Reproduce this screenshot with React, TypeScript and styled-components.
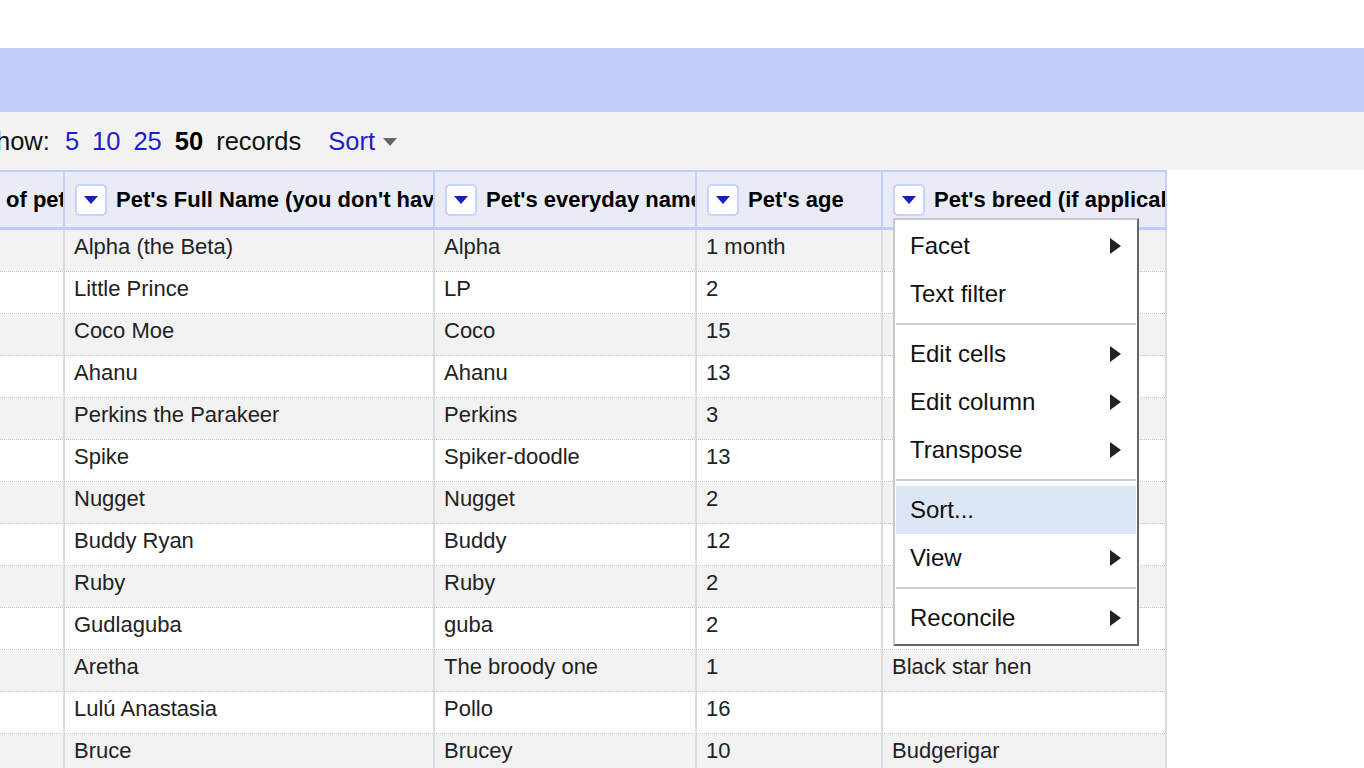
import React from "react";
import styled, { createGlobalStyle } from "styled-components";

const Global = createGlobalStyle`
  html, body { margin: 0; padding: 0; background: #ffffff; }
  body { font-family: "Liberation Sans", Arial, sans-serif; overflow: hidden; }
`;

const Page = styled.div`
  width: 1364px;
  height: 768px;
  overflow: hidden;
  background: #ffffff;
`;

const TopSpace = styled.div`
  height: 48px;
`;

const Banner = styled.div`
  height: 64px;
  background: #bfcdf8;
`;

const Toolbar = styled.div`
  height: 58px;
  background: #f2f2f2;
  display: flex;
  align-items: center;
  gap: 13px;
  margin-left: -21px;
  font-size: 25.5px;
  color: #111;
  white-space: nowrap;
`;

const Link = styled.span<{ $first?: boolean }>`
  color: #1d1dcc;
  margin-left: ${(p) => (p.$first ? "2px" : "0")};
`;

const Current = styled.span`
  font-weight: bold;
  color: #000;
`;

const SortMenu = styled.span`
  display: flex;
  align-items: center;
  gap: 8px;
  margin-left: 14px;
  color: #1d1dcc;
`;

const Caret = styled.span`
  width: 0;
  height: 0;
  border-left: 7.5px solid transparent;
  border-right: 7.5px solid transparent;
  border-top: 8px solid #666;
  margin-top: 2px;
`;

const TableWrap = styled.div`
  position: relative;
  width: 1167px;
`;

const cols = "65px 370px 262px 186px 284px";

const HeaderRow = styled.div`
  display: grid;
  grid-template-columns: ${cols};
  height: 55px;
  border-top: 2px solid #bfcdf8;
  border-bottom: 3px solid #bfcdf8;
  background: #e9ecf6;
`;

const HeaderCell = styled.div<{ $pad?: number }>`
  display: flex;
  align-items: center;
  gap: 9px;
  padding-left: ${(p) => p.$pad ?? 10}px;
  border-right: 2px solid #c4d0f6;
  overflow: hidden;
  white-space: nowrap;
  font-size: 22px;
  font-weight: bold;
  color: #000;
`;

const DropButton = styled.span`
  flex: none;
  width: 28px;
  height: 28px;
  border: 2px solid #c6d2f7;
  border-radius: 5px;
  background: #ffffff;
  display: flex;
  align-items: center;
  justify-content: center;
  &::after {
    content: "";
    width: 0;
    height: 0;
    border-left: 7px solid transparent;
    border-right: 7px solid transparent;
    border-top: 8px solid #1c1cb8;
    margin-top: 1px;
  }
`;

const Row = styled.div<{ $odd: boolean }>`
  display: grid;
  grid-template-columns: ${cols};
  height: 41px;
  border-bottom: 1px dotted #c4c4c4;
  background: ${(p) => (p.$odd ? "#f2f2f2" : "#ffffff")};
`;

const Cell = styled.div`
  padding: 4px 0 0 9px;
  border-right: 2px solid #dcdcdc;
  font-size: 22px;
  line-height: 26px;
  color: #222;
  white-space: nowrap;
  overflow: hidden;
`;

const Menu = styled.div`
  position: absolute;
  left: 893px;
  top: 48px;
  width: 240px;
  padding: 2px 1px;
  background: #ffffff;
  border-top: 2px solid #c8c8c8;
  border-left: 2px solid #c8c8c8;
  border-right: 2px solid #666666;
  border-bottom: 2px solid #666666;
  z-index: 5;
`;

const MenuItem = styled.div<{ $active?: boolean }>`
  height: 48px;
  display: flex;
  align-items: center;
  justify-content: space-between;
  padding: 0 15px 0 14px;
  font-size: 24px;
  color: #111;
  background: ${(p) => (p.$active ? "#dce6f5" : "transparent")};
`;

const SubArrow = styled.span`
  width: 0;
  height: 0;
  border-top: 8px solid transparent;
  border-bottom: 8px solid transparent;
  border-left: 11px solid #222;
`;

const Separator = styled.div`
  height: 2px;
  margin: 5px 0;
  background: #cccccc;
`;

const rows: [string, string, string, string][] = [
  ["Alpha (the Beta)", "Alpha", "1 month", ""],
  ["Little Prince", "LP", "2", ""],
  ["Coco Moe", "Coco", "15", ""],
  ["Ahanu", "Ahanu", "13", ""],
  ["Perkins the Parakeer", "Perkins", "3", ""],
  ["Spike", "Spiker-doodle", "13", ""],
  ["Nugget", "Nugget", "2", ""],
  ["Buddy Ryan", "Buddy", "12", ""],
  ["Ruby", "Ruby", "2", ""],
  ["Gudlaguba", "guba", "2", ""],
  ["Aretha", "The broody one", "1", "Black star hen"],
  ["Lulú Anastasia", "Pollo", "16", ""],
  ["Bruce", "Brucey", "10", "Budgerigar"],
];

type MenuEntry = { label: string; sub?: boolean; active?: boolean } | "sep";

const menu: MenuEntry[] = [
  { label: "Facet", sub: true },
  { label: "Text filter" },
  "sep",
  { label: "Edit cells", sub: true },
  { label: "Edit column", sub: true },
  { label: "Transpose", sub: true },
  "sep",
  { label: "Sort...", active: true },
  { label: "View", sub: true },
  "sep",
  { label: "Reconcile", sub: true },
];

const headers = [
  "Pet's Full Name (you don't have to use the full name)",
  "Pet's everyday name",
  "Pet's age",
  "Pet's breed (if applicable)",
];

export default function App() {
  return (
    <Page>
      <Global />
      <TopSpace />
      <Banner />
      <Toolbar>
        <span>Show:</span>
        <Link $first>5</Link>
        <Link>10</Link>
        <Link>25</Link>
        <Current>50</Current>
        <span>records</span>
        <SortMenu>
          Sort
          <Caret />
        </SortMenu>
      </Toolbar>
      <TableWrap>
        <HeaderRow>
          <HeaderCell $pad={6}>of pet</HeaderCell>
          {headers.map((h) => (
            <HeaderCell key={h}>
              <DropButton />
              {h}
            </HeaderCell>
          ))}
        </HeaderRow>
        {rows.map((r, i) => (
          <Row key={i} $odd={i % 2 === 0}>
            <Cell />
            {r.map((c, j) => (
              <Cell key={j}>{c}</Cell>
            ))}
          </Row>
        ))}
        <Menu>
          {menu.map((m, i) =>
            m === "sep" ? (
              <Separator key={i} />
            ) : (
              <MenuItem key={i} $active={m.active}>
                <span>{m.label}</span>
                {m.sub && <SubArrow />}
              </MenuItem>
            )
          )}
        </Menu>
      </TableWrap>
    </Page>
  );
}
